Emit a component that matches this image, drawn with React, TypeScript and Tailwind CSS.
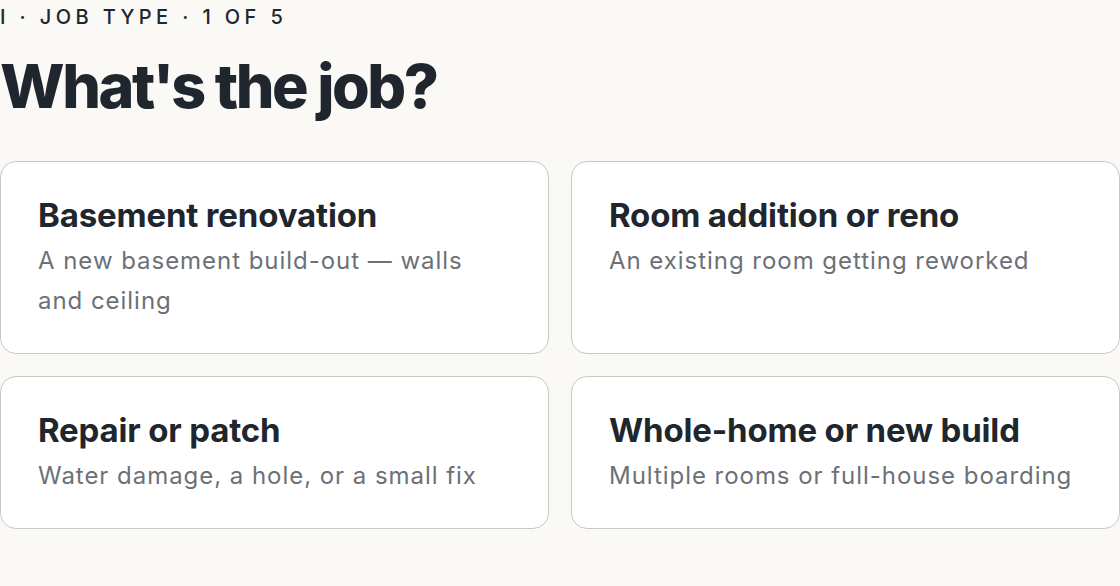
const options = [
  {
    title: "Basement renovation",
    desc: "A new basement build-out — walls and ceiling",
  },
  {
    title: "Room addition or reno",
    desc: "An existing room getting reworked",
  },
  {
    title: "Repair or patch",
    desc: "Water damage, a hole, or a small fix",
  },
  {
    title: "Whole-home or new build",
    desc: "Multiple rooms or full-house boarding",
  },
];

export default function App() {
  return (
    <div className="min-h-[586px] w-[1120px] bg-[#faf9f6] font-['Inter',sans-serif] text-[#1f262d]">
      <div className="pt-[1px] text-[20px] font-medium uppercase leading-[32px] tracking-[0.22em]">
        I · Job type · 1 of 5
      </div>
      <h1 className="mt-[9px] text-[61px] font-extrabold leading-[88px] tracking-[-0.04em]">
        What's the job?
      </h1>

      <div className="mt-[31px] grid grid-cols-2 gap-[22px]">
        {options.map((o) => (
          <div
            key={o.title}
            className="flex cursor-pointer flex-col rounded-[16px] border border-[#c8c8c6] bg-white pb-[32px] pl-[37px] pr-[40px] pt-[34px]"
          >
            <div className="text-[33px] font-bold leading-[38px] tracking-[-0.005em]">
              {o.title}
            </div>
            <div className="mt-[7px] text-[24px] font-normal leading-[40px] tracking-[0.04em] text-[#6b7177]">
              {o.desc}
            </div>
          </div>
        ))}
      </div>
    </div>
  );
}
